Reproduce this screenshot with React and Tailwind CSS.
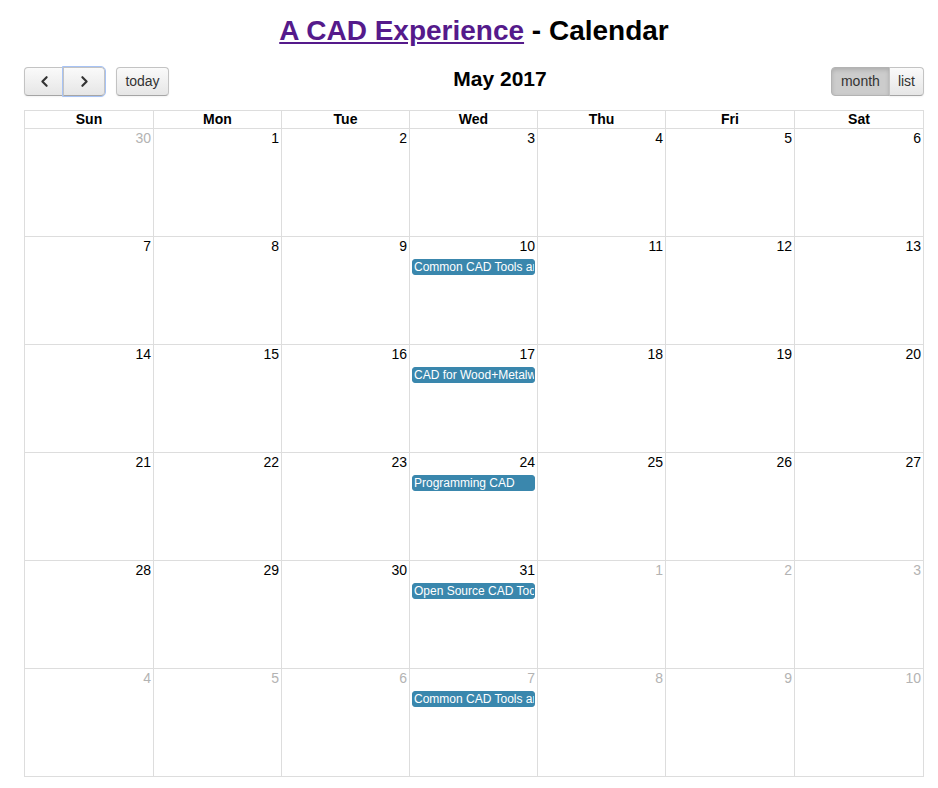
import React from "react";
import { ChevronLeft, ChevronRight } from "lucide-react";

const days = ["Sun", "Mon", "Tue", "Wed", "Thu", "Fri", "Sat"];

const weeks = [
    [[30, true], [1], [2], [3], [4], [5], [6]],
    [[7], [8], [9], [10, false, "Common CAD Tools and"], [11], [12], [13]],
    [[14], [15], [16], [17, false, "CAD for Wood+Metalworking"], [18], [19], [20]],
    [[21], [22], [23], [24, false, "Programming CAD"], [25], [26], [27]],
    [[28], [29], [30], [31, false, "Open Source CAD Tools"], [1, true], [2, true], [3, true]],
    [[4, true], [5, true], [6, true], [7, true, "Common CAD Tools and"], [8, true], [9, true], [10, true]],
];

const cols = "grid grid-cols-[129px_128px_128px_128px_128px_129px_129px]";

const btn =
    "h-[29px] border border-[#c3c3c3] border-b-[#a5a5a5] bg-gradient-to-b from-[#fafafa] to-[#e6e6e6] text-[#333] shadow-[inset_0_1px_0_rgba(255,255,255,0.2),0_1px_2px_rgba(0,0,0,0.05)]";

export default function App() {
    return (
        <div className="min-h-screen bg-white font-['Liberation_Sans',Arial,sans-serif] text-black">
            <div className="ml-[24px] w-[900px]">
                {/* Title */}
                <h1 className="pt-[15px] text-center text-[28px] font-bold leading-[32px]">
                    <a href="#" className="text-[#551a8b] underline">A CAD Experience</a> - Calendar
                </h1>

                {/* Toolbar */}
                <div className="mt-[20px] flex h-[29px] items-start">
                    <div className="flex items-center">
                        <button className={`${btn} flex w-[40px] items-center justify-center rounded-l-[4px]`}>
                            <ChevronLeft size={17} strokeWidth={3} />
                        </button>
                        <button className={`${btn} -ml-px flex w-[42px] items-center justify-center rounded-r-[4px] border-[#7fa8f0] outline outline-1 outline-[#a7c3f5]`}>
                            <ChevronRight size={17} strokeWidth={3} />
                        </button>
                        <button className={`${btn} ml-[11px] w-[53px] rounded-[4px] text-[14px]`}>today</button>
                    </div>
                    <h2 className="flex-1 text-center text-[21px] font-bold leading-[24px]">May 2017</h2>
                    <div className="flex">
                        <button className="h-[29px] rounded-l-[4px] border border-[#b3b3b3] bg-[#cccccc] px-[9px] text-[14px] text-[#333] shadow-[inset_0_2px_4px_rgba(0,0,0,0.15)]">
                            month
                        </button>
                        <button className={`${btn} -ml-px rounded-r-[4px] px-[8px] text-[14px]`}>list</button>
                    </div>
                </div>

                {/* Grid */}
                <div className="mt-[14px] border-l border-t border-[#ddd]">
                    <div className={cols}>
                        {days.map((d) => (
                            <div key={d} className="h-[18px] border-b border-r border-[#ddd] text-center text-[14px] font-bold leading-[16px]">
                                {d}
                            </div>
                        ))}
                    </div>
                    {weeks.map((week, wi) => (
                        <div key={wi} className={cols}>
                            {week.map(([n, other, ev], di) => (
                                <div key={di} className="h-[108px] min-w-0 border-b border-r border-[#ddd]">
                                    <div className={`pr-[2px] text-right text-[14px] leading-[19px] ${other ? "text-[#b3b3b3]" : "text-black"}`}>
                                        {n}
                                    </div>
                                    {ev && (
                                        <div className="mx-[2px] mt-[3px] h-[16px] overflow-hidden whitespace-nowrap rounded-[3px] border border-[#3a87ad] bg-[#3a87ad] pl-[1px] text-[12px] leading-[14px] text-white">
                                            {ev}
                                        </div>
                                    )}
                                </div>
                            ))}
                        </div>
                    ))}
                </div>
            </div>
        </div>
    );
}
